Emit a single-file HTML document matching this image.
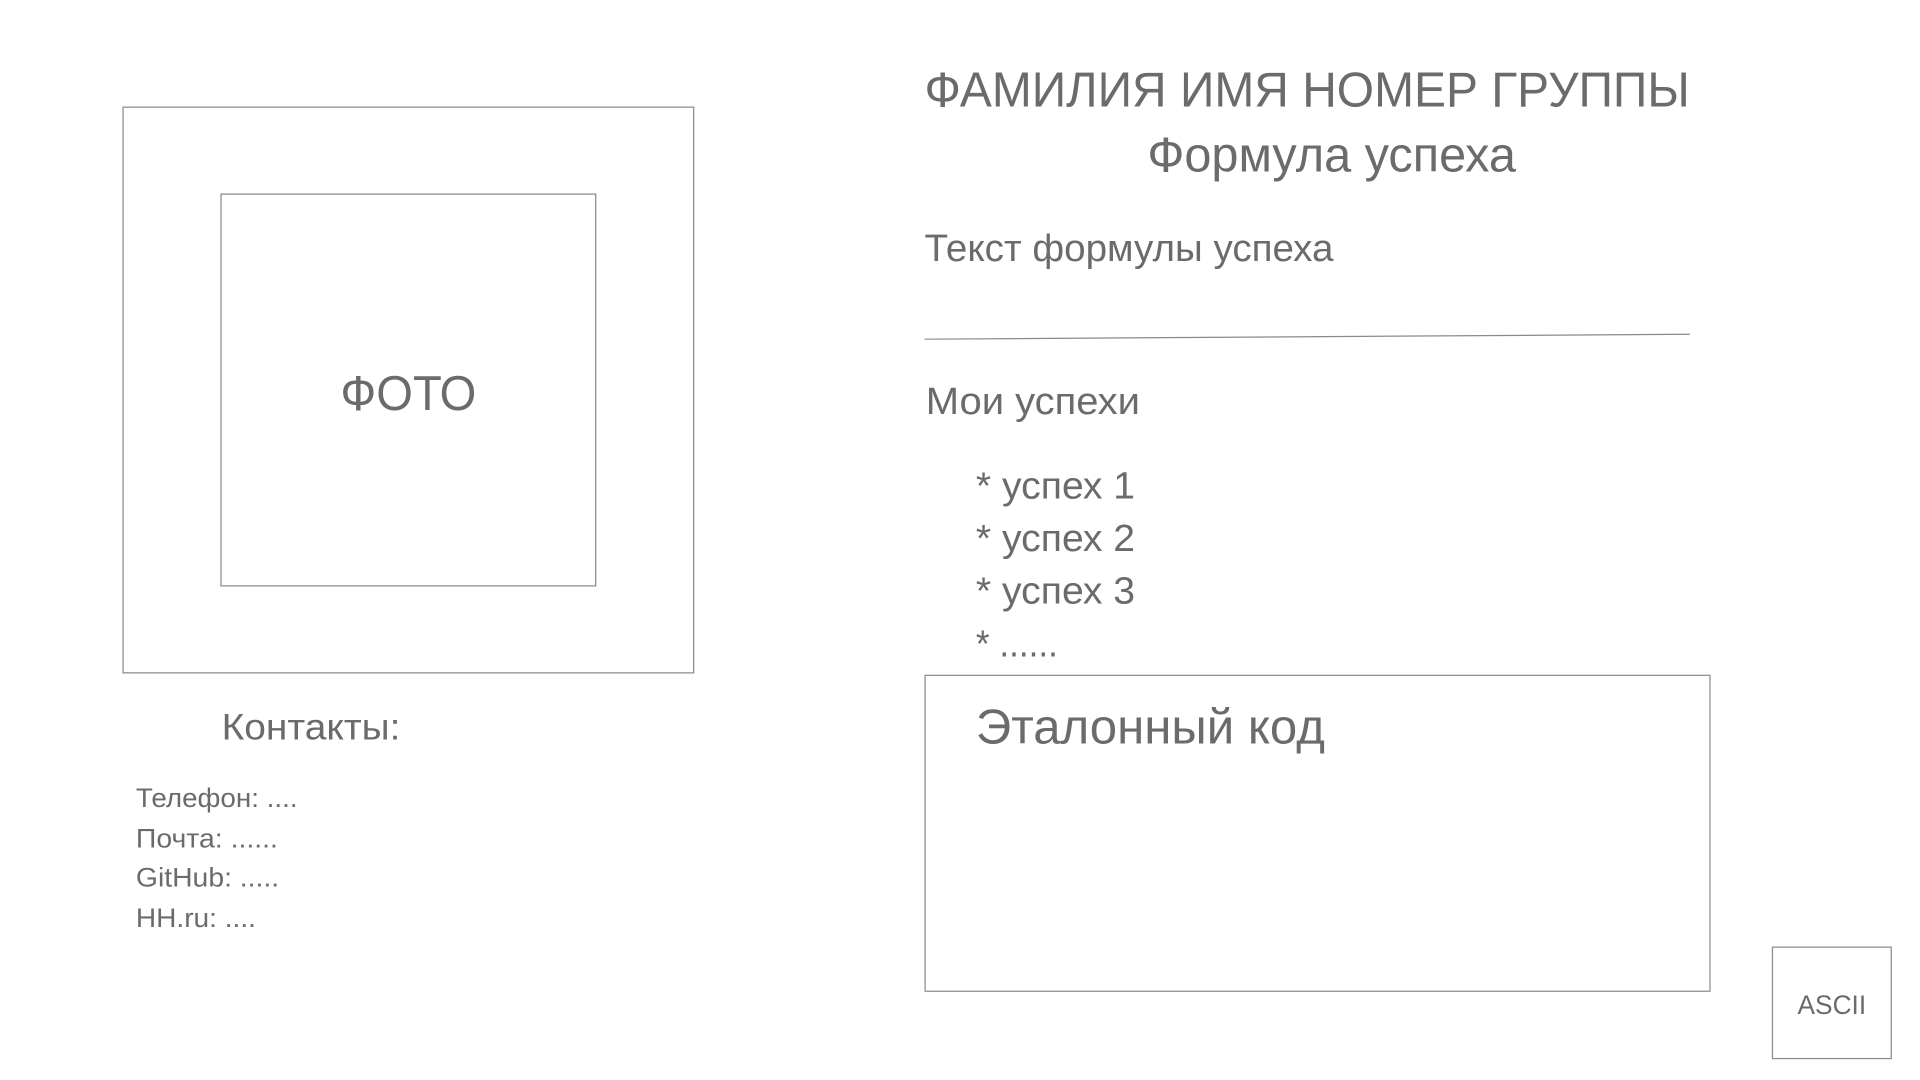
<!DOCTYPE html>
<html><head><meta charset="utf-8"><style>
html,body{margin:0;padding:0;background:#fff;width:1920px;height:1080px;overflow:hidden}
svg{display:block}
text{font-family:"Liberation Sans","DejaVu Sans",sans-serif;fill:#6b6b6b}
</style></head><body>
<svg width="1920" height="1080" viewBox="0 0 1568 882" xmlns="http://www.w3.org/2000/svg">
<g fill="none" stroke="#8a8a8a" stroke-width="1">
<rect x="100.5" y="87.5" width="466" height="462"/>
<rect x="180.5" y="158.5" width="306" height="320"/>
<rect x="755.5" y="551.5" width="641" height="258"/>
<rect x="1447.5" y="773.5" width="97" height="91"/>
<line x1="755" y1="277" x2="1380" y2="273"/>
</g>
<text x="278" y="335" font-size="40" textLength="111" lengthAdjust="spacingAndGlyphs">ФОТО</text>
<text x="755" y="87" font-size="40" textLength="625" lengthAdjust="spacingAndGlyphs">ФАМИЛИЯ ИМЯ НОМЕР ГРУППЫ</text>
<text x="937" y="140" font-size="40" textLength="301" lengthAdjust="spacingAndGlyphs">Формула успеха</text>
<text x="755" y="213" font-size="31" textLength="334" lengthAdjust="spacingAndGlyphs">Текст формулы успеха</text>
<text x="756" y="338" font-size="31" textLength="175" lengthAdjust="spacingAndGlyphs">Мои успехи</text>
<text x="797" y="407" font-size="31" textLength="130" lengthAdjust="spacingAndGlyphs">* успех 1</text>
<text x="797" y="450" font-size="31" textLength="130" lengthAdjust="spacingAndGlyphs">* успех 2</text>
<text x="797" y="493" font-size="31" textLength="130" lengthAdjust="spacingAndGlyphs">* успех 3</text>
<text x="797" y="536" font-size="31" textLength="67" lengthAdjust="spacingAndGlyphs">* ......</text>
<text x="797" y="607" font-size="40" textLength="285" lengthAdjust="spacingAndGlyphs">Эталонный код</text>
<text x="1468" y="828" font-size="22" textLength="56" lengthAdjust="spacingAndGlyphs">ASCII</text>
<text x="181" y="604" font-size="30" textLength="146" lengthAdjust="spacingAndGlyphs">Контакты:</text>
<text x="111" y="659" font-size="22" textLength="132" lengthAdjust="spacingAndGlyphs">Телефон: ....</text>
<text x="111" y="692" font-size="22" textLength="116" lengthAdjust="spacingAndGlyphs">Почта: ......</text>
<text x="111" y="724" font-size="22" textLength="117" lengthAdjust="spacingAndGlyphs">GitHub: .....</text>
<text x="111" y="757" font-size="22" textLength="98" lengthAdjust="spacingAndGlyphs">HH.ru: ....</text>
</svg>
</body></html>
